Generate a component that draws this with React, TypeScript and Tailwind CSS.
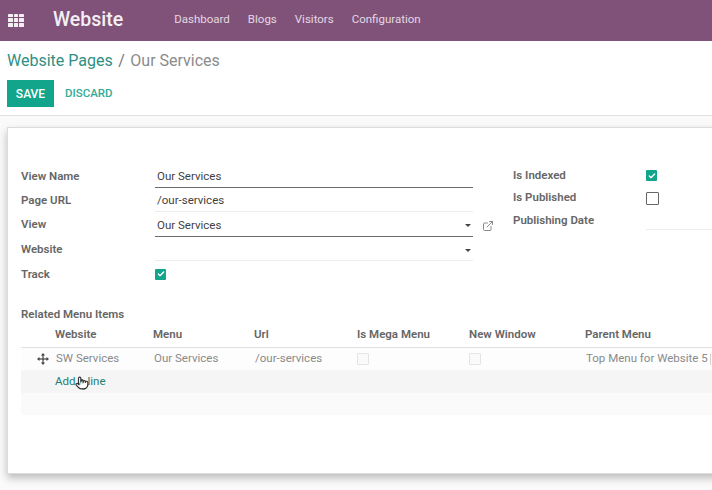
import React from "react";
import { ExternalLink, Pointer, Check } from "lucide-react";

const Label = ({ children }: { children: React.ReactNode }) => (
  <div className="w-[134px] shrink-0 pt-[1px] font-semibold text-[#666] text-[11.5px]">{children}</div>
);

const Tick = () => (
  <div className="w-[11px] h-[11px] rounded-[1px] bg-[#12a58c] flex items-center justify-center">
    <Check size={8} strokeWidth={4} color="#fff" />
  </div>
);

const Caret = () => (
  <div className="w-0 h-0 border-x-[3px] border-x-transparent border-t-[3px] border-t-[#444]" />
);

const Row = ({ label, h, children }: { label: string; h: string; children: React.ReactNode }) => (
  <div className={`flex items-center ${h}`}>
    <Label>{label}</Label>
    {children}
  </div>
);

const Field = ({ text, dark, caret, h, pt }: { text?: string; dark?: boolean; caret?: boolean; h: string; pt: string }) => (
  <div
    className={`w-[318px] ${h} ${pt} flex items-center justify-between pl-[2px] pr-[2px] text-[11.5px] text-[#3f3f3f] border-b ${
      dark ? "border-[#6b6b6b]" : "border-[#ececec]"
    }`}
  >
    <span>{text}</span>
    {caret && <Caret />}
  </div>
);

const cols = [
  ["w-[34px]", ""],
  ["w-[98px]", "Website"],
  ["w-[101px]", "Menu"],
  ["w-[103px]", "Url"],
  ["w-[112px]", "Is Mega Menu"],
  ["w-[116px]", "New Window"],
  ["w-[140px]", "Parent Menu"],
];

const Box = () => <div className="w-[12px] h-[12px] border border-[#e4e4e4] bg-[#fafafa] rounded-[1px]" />;

const Handle = () => (
  <svg width="12" height="12" viewBox="0 0 12 12" fill="#444">
    <rect x="1" y="5.4" width="10" height="1.2" />
    <rect x="5.4" y="1" width="1.2" height="10" />
    <path d="M6 0 L8 2.5 H4 Z" />
    <path d="M6 12 L8 9.5 H4 Z" />
    <path d="M0 6 L2.5 4 V8 Z" />
    <path d="M12 6 L9.5 4 V8 Z" />
  </svg>
);

export default function App() {
  return (
    <div className="w-[712px] h-[490px] overflow-hidden bg-[#fafafa] flex flex-col font-['Roboto',sans-serif]">
      <header className="h-[41px] pb-[1px] shrink-0 bg-[#80527a] flex items-center text-white">
        <div className="ml-[8px] w-[16px] h-[13px] grid grid-cols-3 gap-[1px]">
          {Array.from({ length: 9 }).map((_, i) => (
            <div key={i} className="bg-[#f3eef2] rounded-[0.5px]" />
          ))}
        </div>
        <div className="ml-[29px] text-[19.5px] font-medium text-[#f4eff3] leading-none">Website</div>
        <nav className="ml-[51px] flex gap-[18px] text-[11.5px] text-[#e3d8e0]">
          <span>Dashboard</span>
          <span>Blogs</span>
          <span>Visitors</span>
          <span>Configuration</span>
        </nav>
      </header>

      <div className="h-[75px] shrink-0 bg-white border-b border-[#e2e2e2] px-[7px]">
        <div className="h-[39px] flex items-center text-[16px] gap-[5.5px]">
          <span className="text-[#2e8f84]">Website Pages</span>
          <span className="text-[#777]">/</span>
          <span className="text-[#8b8b8b]">Our Services</span>
        </div>
        <div className="flex items-center">
          <div className="w-[47px] h-[27px] bg-[#12a58c] flex items-center justify-center text-white text-[12px] font-medium">
            SAVE
          </div>
          <div className="ml-[11px] text-[#32ab99] text-[11.5px] font-medium">DISCARD</div>
        </div>
      </div>

      <main className="flex-1 pl-[7px] pt-[11px] overflow-hidden">
        <div className="w-[720px] h-[347px] bg-white border border-[#dcdcdc] shadow-[0_4px_8px_rgba(0,0,0,0.25)] pl-[13px] pt-[36px]">
          <div className="flex">
            <div className="w-[452px] shrink-0">
              <Row label="View Name" h="h-[24px]">
                <Field text="Our Services" dark h="h-[24px]" pt="pt-[2px]" />
              </Row>
              <Row label="Page URL" h="h-[24px]">
                <Field text="/our-services" h="h-[24px]" pt="pt-[3px]" />
              </Row>
              <div className="relative">
                <Row label="View" h="h-[25px]">
                  <Field text="Our Services" dark caret h="h-[25px]" pt="pt-[3px]" />
                </Row>
                <ExternalLink size={12} color="#8a8a8a" className="absolute left-[461px] top-[8px]" />
              </div>
              <Row label="Website" h="h-[24px]">
                <Field caret h="h-[24px]" pt="pt-[3px]" />
              </Row>
              <Row label="Track" h="h-[26px]">
                <Tick />
              </Row>
            </div>
            <div className="ml-[40px] text-[11.5px]">
              <div className="flex items-center h-[23px]">
                <div className="w-[133px] font-semibold text-[#666]">Is Indexed</div>
                <Tick />
              </div>
              <div className="flex items-center h-[22px]">
                <div className="w-[133px] font-semibold text-[#666]">Is Published</div>
                <div className="w-[13px] h-[13px] border border-[#666] rounded-[1px]" />
              </div>
              <div className="flex items-start h-[22px] pt-[3px]">
                <div className="w-[133px] font-semibold text-[#666]">Publishing Date</div>
                <div className="w-[70px] h-[18px] border-b border-[#ececec]" />
              </div>
            </div>
          </div>

          <div className="mt-[19px] text-[11.5px] font-semibold text-[#666] leading-[16px]">Related Menu Items</div>
          <div className="flex items-center h-[26px] border-b border-[#e0e0e0] text-[11.5px] font-semibold text-[#666]">
            {cols.map(([w, t], i) => (
              <div key={i} className={`${w} shrink-0`}>
                {t}
              </div>
            ))}
          </div>
          <div className="flex items-center h-[22px] bg-[#fdfdfd] text-[11.5px] text-[#8a8a8a]">
            <div className="w-[34px] shrink-0 flex justify-end pr-[6px]">
              <Handle />
            </div>
            <div className="w-[98px] shrink-0 pl-[1px]">SW Services</div>
            <div className="w-[101px] shrink-0 pl-[1px]">Our Services</div>
            <div className="w-[103px] shrink-0 pl-[1px]">/our-services</div>
            <div className="w-[112px] shrink-0"><Box /></div>
            <div className="w-[116px] shrink-0"><Box /></div>
            <div className="w-[140px] shrink-0 whitespace-nowrap pl-[1px] flex items-center">
              Top Menu for Website 5
              <span className="ml-[2px] w-[1px] h-[11px] bg-[#d8d0c8]" />
            </div>
          </div>
          <div className="relative flex items-center h-[23px] bg-[#f5f5f5] pl-[34px] text-[11.5px] text-[#1f7f74]">
            Add a line
            <Pointer size={14} color="#333" fill="#fff" className="absolute left-[54px] top-[6px]" />
          </div>
          <div className="h-[22px] bg-[#fafafa]" />
        </div>
      </main>
    </div>
  );
}
